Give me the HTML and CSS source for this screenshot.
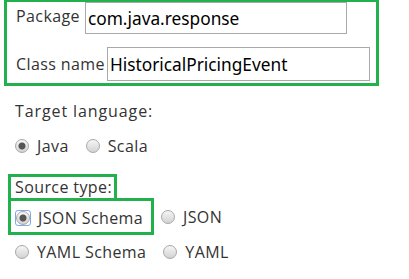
FILE: index.html
```html
<!doctype html>
<html>

<head>
    <meta charset="utf-8">
    <title>Generator settings</title>
    <link rel="stylesheet" href="styles.css">
</head>

<body>
<div class="names">
    <div class="row">
        <label class="lbl">Package</label>
        <input type="text" class="text pkg" value="com.java.response"/>
    </div>
    <div class="row row2">
        <label class="lbl">Class name</label>
        <input type="text" class="text cls" value="HistoricalPricingEvent"/>
    </div>
</div>

<p class="title lang-title">Target language:</p>
<div class="opts lang">
    <label class="opt"><input type="radio" name="lang" checked/>Java</label>
    <label class="opt"><input type="radio" name="lang"/>Scala</label>
</div>

<p class="title src-title"><span class="mark">Source type:</span></p>
<div class="opts src1">
    <label class="opt mark mark-opt"><span class="ring"><input type="radio" name="src" checked/></span>JSON Schema</label>
    <label class="opt"><input type="radio" name="src"/>JSON</label>
</div>
<div class="opts src2">
    <label class="opt"><input type="radio" name="src"/>YAML Schema</label>
    <label class="opt"><input type="radio" name="src"/>YAML</label>
</div>
</body>

</html>
```

FILE: styles.css
```css
* {
    padding: 0;
    margin: 0;
    box-sizing: border-box;
}

body {
    font-family: "Open Sans", "Noto Sans", sans-serif;
    font-size: 16px;
    letter-spacing: 0.4px;
    color: #333;
    background: #fff;
}

/* green marker boxes */
.names {
    width: 375px;
    height: 87px;
    margin: -1px 0 0 4px;
    border: 3px solid #22b14c;
    padding: 0 0 0 9px;
}

.row {
    display: flex;
    align-items: flex-start;
}

.row2 {
    margin-top: 13px;
}

.lbl {
    line-height: 20px;
    padding-top: 4px;
}

.row2 .lbl {
    padding-top: 7px;
}

.text {
    height: 34px;
    border: 1px solid #a9a9a9;
    padding: 0 2px;
    margin-left: 5px;
    font-family: "Noto Sans", sans-serif;
    font-size: 17.3px;
    letter-spacing: 0;
    color: #000;
    outline: none;
}

.pkg {
    width: 262px;
    height: 32px;
}

.cls {
    width: 263px;
    margin-left: 2px;
}

.title {
    line-height: 20px;
    padding-left: 15px;
}

.lang-title {
    margin-top: 15px;
    letter-spacing: 0.9px;
}

.opts {
    display: flex;
    align-items: center;
    padding-left: 15px;
    height: 20px;
}

.opt {
    display: flex;
    align-items: center;
    margin-right: 17px;
}

.opt input {
    -webkit-appearance: none;
    appearance: none;
    width: 14px;
    height: 14px;
    margin: 0 8px 0 0;
    border: 1px solid #a8a8a8;
    border-radius: 50%;
    background: linear-gradient(#f6f6f6, #d2d2d2);
    flex: none;
}

.opt input:checked {
    background: radial-gradient(circle, #555 0 3px, transparent 4px), linear-gradient(#f6f6f6, #d2d2d2);
}

.lang {
    margin-top: 15px;
}

.src-title {
    margin-top: 18px;
    padding-left: 8px;
}

.mark {
    display: inline-block;
    border: 3px solid #22b14c;
}

.src-title .mark {
    height: 27px;
    line-height: 21px;
    padding: 0 2px 0 4px;
}

.src1 {
    height: 37px;
    margin-top: -3px;
    padding-left: 8px;
}

.mark-opt {
    display: flex;
    height: 37px;
    width: 146px;
    padding: 3px 0 0 4px;
    margin-right: 7px;
}

/* focus ring round the checked radio */
.ring {
    display: flex;
    flex: none;
    border: 1px solid #7ea9e8;
    border-radius: 3px;
    margin-right: 7px;
}

.ring input {
    margin: 0;
}

.src2 {
    margin-top: 7px;
}
```
